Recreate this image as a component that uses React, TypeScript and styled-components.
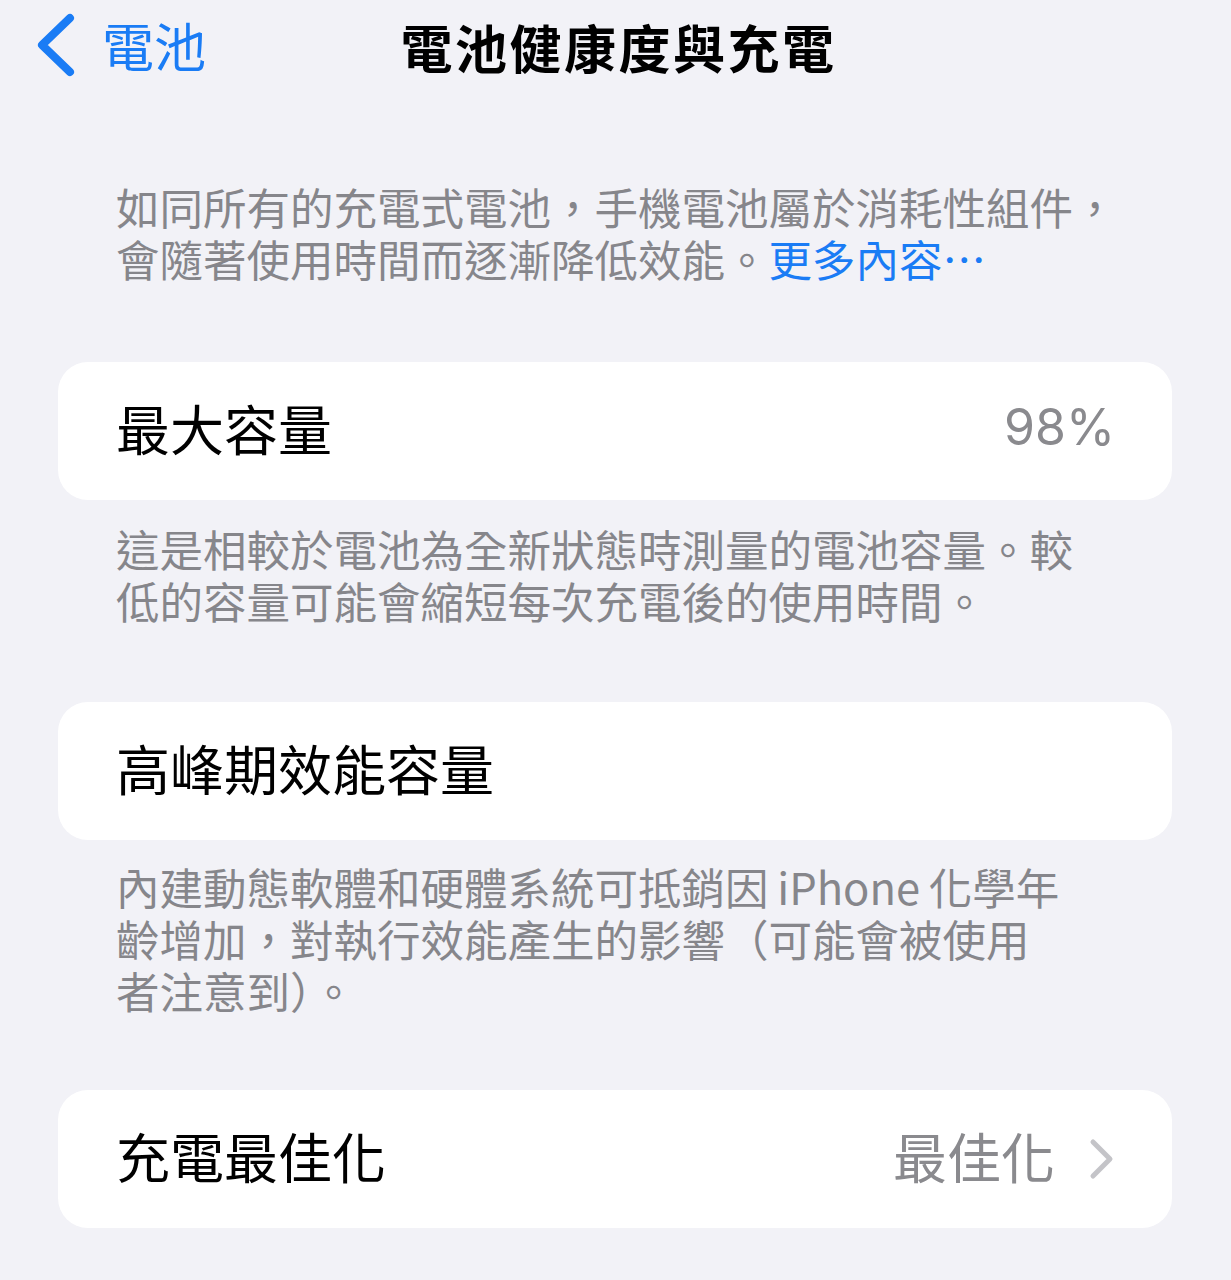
import styled, { createGlobalStyle } from 'styled-components';

const GlobalStyle = createGlobalStyle`
  html, body {
    margin: 0;
    padding: 0;
    background: #f2f2f7;
  }
  body {
    font-family: "Noto Sans CJK TC", "Noto Sans", sans-serif;
    -webkit-font-smoothing: antialiased;
  }
`

const Page = styled.div`
  width: 1231px;
  min-height: 1280px;
  background: #f2f2f7;
  display: flex;
  flex-direction: column;
`

const Header = styled.header`
  position: relative;
  height: 94px;
  display: flex;
  align-items: center;
  justify-content: center;
`

const BackButton = styled.div`
  position: absolute;
  left: 36px;
  top: 13px;
  display: flex;
  align-items: center;
  gap: 26px;
  color: #1a7cf5;
  font-size: 52px;
  line-height: 64px;
`

const Title = styled.h1`
  margin: 0;
  font-size: 52px;
  font-weight: 700;
  color: #000;
  letter-spacing: 2.5px;
  line-height: 90px;
  padding-left: 6px;
`

const Footnote = styled.p<{ $top: number; $bottom: number }>`
  margin: ${p => p.$top}px 0 ${p => p.$bottom}px;
  padding: 0 58px 0 116px;
  font-size: 43.5px;
  line-height: 52px;
  color: #86868b;
  white-space: nowrap;
`

const MoreLink = styled.span`
  color: #1a7cf5;
`

const Card = styled.div`
  margin: 0 59px 0 58px;
  height: 138px;
  background: #fff;
  border-radius: 30px;
  display: flex;
  align-items: center;
  justify-content: space-between;
  padding: 0 57px 8px 58px;
  box-sizing: border-box;
`

const Label = styled.span`
  font-size: 54px;
  color: #000;
`

const Value = styled.span`
  display: flex;
  align-items: center;
  gap: 34px;
  font-size: 54px;
  color: #8a8a8e;
`

const Percent = styled.span`
  font-family: Inter, "Noto Sans", sans-serif;
  font-size: 50px;
  color: #8a8a8e;
`

function BackChevron() {
  return (
    <svg width="40" height="64" viewBox="0 0 40 64">
      <polyline points="34,5 6,32 34,59" fill="none" stroke="#1a7cf5" strokeWidth="8" strokeLinecap="round" strokeLinejoin="round" />
    </svg>
  )
}

function RowChevron() {
  return (
    <svg width="26" height="42" viewBox="0 0 26 42" style={{ marginTop: 8 }}>
      <polyline points="4,4 21,21 4,38" fill="none" stroke="#c4c4c8" strokeWidth="5" strokeLinecap="round" strokeLinejoin="round" />
    </svg>
  )
}

export default function App() {
  return (
    <>
      <GlobalStyle />
      <Page>
        <Header>
          <BackButton>
            <BackChevron />
            <span>電池</span>
          </BackButton>
          <Title>電池健康度與充電</Title>
        </Header>

        <Footnote $top={87} $bottom={77}>
          如同所有的充電式電池，手機電池屬於消耗性組件，<br />
          會隨著使用時間而逐漸降低效能。<MoreLink>更多內容⋯</MoreLink>
        </Footnote>

        <Card>
          <Label>最大容量</Label>
          <Percent>98%</Percent>
        </Card>

        <Footnote $top={23} $bottom={75}>
          這是相較於電池為全新狀態時測量的電池容量。較<br />
          低的容量可能會縮短每次充電後的使用時間。
        </Footnote>

        <Card>
          <Label>高峰期效能容量</Label>
        </Card>

        <Footnote $top={21} $bottom={73}>
          內建動態軟體和硬體系統可抵銷因&thinsp;iPhone&thinsp;化學年<br />
          齡增加，對執行效能產生的影響（可能會被使用<br />
          者注意到）。
        </Footnote>

        <Card>
          <Label>充電最佳化</Label>
          <Value>
            最佳化
            <RowChevron />
          </Value>
        </Card>
      </Page>
    </>
  )
}
